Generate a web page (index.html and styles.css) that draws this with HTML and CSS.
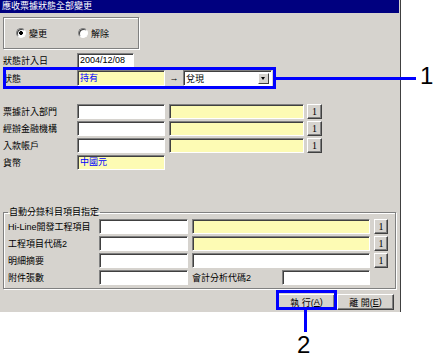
FILE: index.html
```html
<!DOCTYPE html>
<html lang="zh-Hant">
<head>
  <meta charset="UTF-8">
  <title>應收票據狀態全部變更</title>
  <link rel="stylesheet" href="styles.css">
</head>
<body>
  <div class="page">
    <div class="window">
      <div class="titlebar">應收票據狀態全部變更</div>
      <div class="content">
        <div class="radio-box">
          <span class="radio checked"></span><span class="radio-label">變更</span>
          <span class="radio second"></span><span class="radio-label">解除</span>
        </div>

        <div class="row date-row">
          <span class="label">狀態計入日</span>
          <span class="field w57">2004/12/08</span>
        </div>
        <div class="row status-row">
          <span class="label">狀態</span>
          <span class="field yellow w88 blue">持有</span>
          <span class="arrow">→</span>
          <span class="select">兌現<span class="drop"></span></span>
        </div>

        <div class="links">
          <div class="row">
            <span class="label">票據計入部門</span>
            <span class="field w88"></span>
            <span class="field yellow w135"></span>
            <span class="btn-one">1</span>
          </div>
          <div class="row">
            <span class="label">經辦金融機構</span>
            <span class="field w88"></span>
            <span class="field yellow w135"></span>
            <span class="btn-one">1</span>
          </div>
          <div class="row">
            <span class="label">入款帳戶</span>
            <span class="field w88"></span>
            <span class="field yellow w135"></span>
            <span class="btn-one">1</span>
          </div>
          <div class="row">
            <span class="label">貨幣</span>
            <span class="field yellow w88 blue">中國元</span>
          </div>
        </div>

        <fieldset class="group">
          <legend>自動分錄科目項目指定</legend>
          <div class="row">
            <span class="glabel">Hi-Line開發工程項目</span>
            <span class="field w89"></span>
            <span class="field yellow w178"></span>
            <span class="btn-one small">1</span>
          </div>
          <div class="row">
            <span class="glabel">工程項目代碼2</span>
            <span class="field w89"></span>
            <span class="field yellow w178"></span>
            <span class="btn-one small">1</span>
          </div>
          <div class="row">
            <span class="glabel">明細摘要</span>
            <span class="field w89"></span>
            <span class="field w178"></span>
            <span class="btn-one small">1</span>
          </div>
          <div class="row">
            <span class="glabel">附件張數</span>
            <span class="field w89"></span>
            <span class="mid-label">會計分析代碼2</span>
            <span class="field w88"></span>
          </div>
        </fieldset>

        <div class="actions">
          <span class="button">執 行(<u>A</u>)</span>
          <span class="button">離 開(<u>E</u>)</span>
        </div>
      </div>
    </div>

    <!-- callouts -->
    <div class="mark mark-1"></div>
    <div class="lead lead-1"></div>
    <div class="num num-1">1</div>
    <div class="mark mark-2"></div>
    <div class="lead lead-2"></div>
    <div class="num num-2">2</div>
  </div>
</body>
</html>
```

FILE: styles.css
```css
body { margin: 0; background: #fff; font-family: "Liberation Sans", "Noto Sans CJK TC", sans-serif; font-size: 9px; color: #000; }
.page { position: relative; width: 436px; height: 362px; overflow: hidden; }
.window { width: 400px; height: 312px; background: #d6d3ce; border-right: 1px solid #404040; }
.titlebar { height: 13px; line-height: 13px; margin-right: 1px; padding-left: 2px; background: #00007f; color: #fff; font-size: 9px; }
.content { padding: 4px 4px 0 3px; }

.radio-box { width: 122px; height: 30px; padding-left: 12px; display: flex; align-items: center; border: 1px solid #808080; box-shadow: 1px 1px 0 #fff, inset 1px 1px 0 #fff; }
.radio { width: 8px; height: 8px; border-radius: 50%; background: #fff; border: 1px solid; border-color: #808080 #fff #fff #808080; box-shadow: inset 1px 1px 0 #404040; }
.radio.checked { background: radial-gradient(circle, #000 0 1.6px, #fff 2.2px); }
.radio.second { margin-left: 31px; }
.radio-label { margin-left: 3px; }

.row { display: flex; align-items: center; height: 15px; }
.label { width: 74px; flex: none; }
.date-row { margin-top: 4px; }
.status-row { margin-top: 2px; height: 16px; }

.field { height: 15px; box-sizing: border-box; flex: none; background: #fff; border: 1px solid; border-color: #808080 #fff #fff #808080; box-shadow: inset 1px 1px 0 #404040; padding-left: 2px; line-height: 13px; white-space: nowrap; overflow: hidden; }
.status-row .field { height: 16px; line-height: 14px; }
.yellow { background: #fdfbb4; }
.blue { color: #0000ff; }
.w57 { width: 57px; }
.w88 { width: 88px; }
.w89 { width: 89px; }
.w135 { width: 135px; }
.w178 { width: 178px; }
.row .field + .field { margin-left: 4px; }

.arrow { width: 18px; text-align: center; font-size: 9px; }
.select { width: 89px; height: 16px; box-sizing: border-box; display: flex; align-items: center; justify-content: space-between; padding: 0 2px 0 2px; background: #fff; border: 1px solid; border-color: #808080 #fff #fff #808080; box-shadow: inset 1px 1px 0 #404040; }
.drop { width: 11px; height: 11px; box-sizing: border-box; position: relative; background: #d6d3ce; border: 1px solid; border-color: #fff #404040 #404040 #fff; }
.drop::after { content: ""; position: absolute; left: 2px; top: 3px; border-style: solid; border-width: 3px 2.5px 0 2.5px; border-color: #000 transparent transparent transparent; }

.links { margin-top: 18px; display: flex; flex-direction: column; gap: 2px; }
.btn-one { width: 15px; height: 15px; box-sizing: border-box; flex: none; margin-left: 3px; display: flex; align-items: center; justify-content: center; background: #d6d3ce; border: 1px solid; border-color: #fff #404040 #404040 #fff; box-shadow: inset -1px -1px 0 #808080; font-family: "Liberation Serif", serif; font-size: 10px; }
.btn-one.small { width: 14px; margin-left: 4px; }

.group { margin: 36px 0 0 0; padding: 1px 4px 3px 4px; border: 1px solid #808080; box-shadow: 1px 1px 0 #fff, inset 1px 1px 0 #fff; display: flex; flex-direction: column; gap: 2px; min-width: 0; }
.group legend { padding: 0 1px; line-height: 12px; }
.glabel { width: 91px; flex: none; white-space: nowrap; }
.mid-label { width: 90px; margin-left: 4px; flex: none; }

.actions { margin-top: 5px; padding-right: 2px; display: flex; justify-content: flex-end; gap: 2px; }
.button { width: 57px; height: 16px; box-sizing: border-box; display: flex; align-items: center; justify-content: center; background: #d6d3ce; border: 1px solid; border-color: #fff #404040 #404040 #fff; box-shadow: inset -1px -1px 0 #808080; white-space: pre; }

.mark { position: absolute; box-sizing: border-box; border: 3px solid #0000ff; }
.mark-1 { left: 3px; top: 67px; width: 273px; height: 22px; }
.mark-2 { left: 276px; top: 290px; width: 61px; height: 20px; }
.lead { position: absolute; background: #0000ff; }
.lead-1 { left: 276px; top: 77px; width: 140px; height: 3px; }
.lead-2 { left: 304px; top: 309px; width: 3px; height: 23px; }
.num { position: absolute; font-family: "Liberation Sans", sans-serif; font-size: 24px; line-height: 24px; }
.num-1 { left: 420px; top: 64px; }
.num-2 { left: 297px; top: 333px; }
```
